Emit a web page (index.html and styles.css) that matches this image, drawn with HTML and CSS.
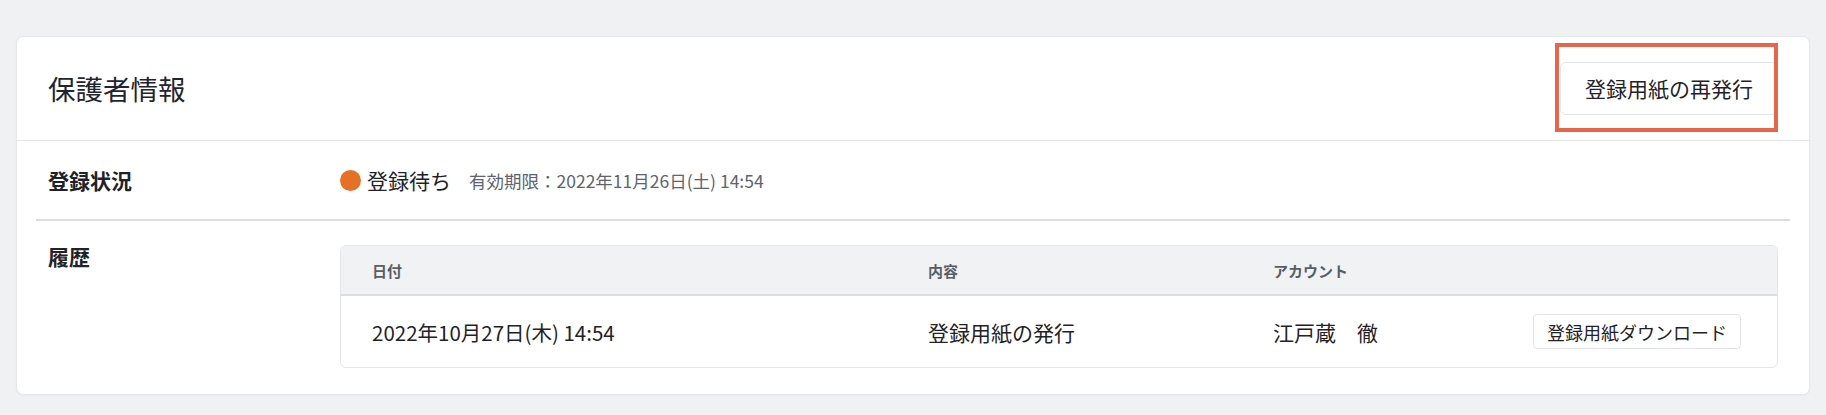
FILE: index.html
```html
<!DOCTYPE html>
<html lang="ja">
<head>
<meta charset="utf-8">
<title>保護者情報</title>
<link rel="stylesheet" href="styles.css">
</head>
<body>
<div class="page">
  <section class="card">
    <header class="card-header">
      <h1 class="card-title">保護者情報</h1>
      <div class="action-wrap">
        <button class="btn btn-lg" type="button">登録用紙の再発行</button>
        <span class="highlight" aria-hidden="true"></span>
      </div>
    </header>
    <div class="row row-status">
      <div class="row-label">登録状況</div>
      <div class="status">
        <span class="dot"></span>
        <span class="status-text">登録待ち</span>
        <span class="expiry">有効期限：2022年11月26日(土) 14:54</span>
      </div>
    </div>
    <div class="divider"></div>
    <div class="row row-history">
      <div class="row-label">履歴</div>
      <div class="table">
        <div class="thead">
          <div class="cell">日付</div>
          <div class="cell">内容</div>
          <div class="cell">アカウント</div>
          <div class="cell"></div>
        </div>
        <div class="tbody">
          <div class="cell cell-date">2022年10月27日(木) 14:54</div>
          <div class="cell">登録用紙の発行</div>
          <div class="cell">江戸蔵　徹</div>
          <div class="cell cell-action"><button class="btn btn-sm" type="button">登録用紙ダウンロード</button></div>
        </div>
      </div>
    </div>
  </section>
</div>
</body>
</html>
```

FILE: styles.css
```css
* { box-sizing: border-box; }

html, body {
  margin: 0;
  padding: 0;
  background: #f0f1f3;
  font-family: "Noto Sans CJK JP", "Noto Sans", sans-serif;
  color: #1f2329;
}

.page {
  padding: 37px 17px 20px;
}

.card {
  background: #ffffff;
  border-radius: 6px;
  box-shadow: 0 0 0 1px #e6e7ea, 0 1px 3px rgba(0, 0, 0, 0.06);
}

.card-header {
  height: 104px;
  padding: 0 31px;
  display: flex;
  align-items: center;
  justify-content: space-between;
  border-bottom: 1px solid #e4e5e8;
}

.card-title {
  margin: 0;
  font-size: 27.5px;
  font-weight: 400;
  line-height: 1;
  color: #1f2430;
}

.action-wrap {
  position: relative;
  display: flex;
}

.btn {
  font-family: inherit;
  background: #ffffff;
  color: #1f2329;
  border: 1px solid #e3e4e8;
  cursor: pointer;
  line-height: 1;
}

.btn-lg {
  height: 53px;
  padding: 0 24px;
  font-size: 21px;
  border-radius: 6px;
}

.btn-sm {
  height: 35px;
  padding: 0 13px;
  font-size: 18px;
  border-radius: 4px;
}

.highlight {
  position: absolute;
  left: -5px;
  top: -19px;
  width: 223px;
  height: 89px;
  border: 4px solid #e8644a;
  pointer-events: none;
}

.row {
  display: grid;
  grid-template-columns: 292px 1fr;
  padding: 0 31px;
}

.row-label {
  font-size: 21px;
  font-weight: 700;
  line-height: 22px;
  color: #1f2329;
}

.row-status {
  height: 78px;
  align-items: center;
}

.status {
  display: flex;
  align-items: center;
}

.dot {
  width: 21px;
  height: 21px;
  border-radius: 50%;
  background: #e57126;
  margin-right: 6px;
}

.status-text {
  font-size: 21px;
  color: #1f2329;
}

.expiry {
  margin-left: 18px;
  font-size: 17.5px;
  color: #5d6470;
}

.divider {
  height: 2px;
  margin: 0 19px;
  background: #dcdde1;
}

.row-history {
  padding-top: 24px;
  padding-bottom: 26px;
  align-items: start;
}

.table {
  border: 1px solid #e5e6ea;
  border-radius: 6px;
  overflow: hidden;
}

.thead,
.tbody {
  display: grid;
  grid-template-columns: 556px 345px 260px 1fr;
  align-items: center;
}

.thead {
  height: 50px;
  background: #f1f2f4;
  border-bottom: 2px solid #dcdde1;
  font-size: 15px;
  font-weight: 700;
  color: #595e66;
}

.tbody {
  height: 71px;
  font-size: 21px;
  color: #1f2329;
}

.cell {
  padding-left: 31px;
}

.cell-date {
  font-size: 20.5px;
}

.cell-action {
  display: flex;
  justify-content: flex-end;
  padding-right: 36px;
}
```
